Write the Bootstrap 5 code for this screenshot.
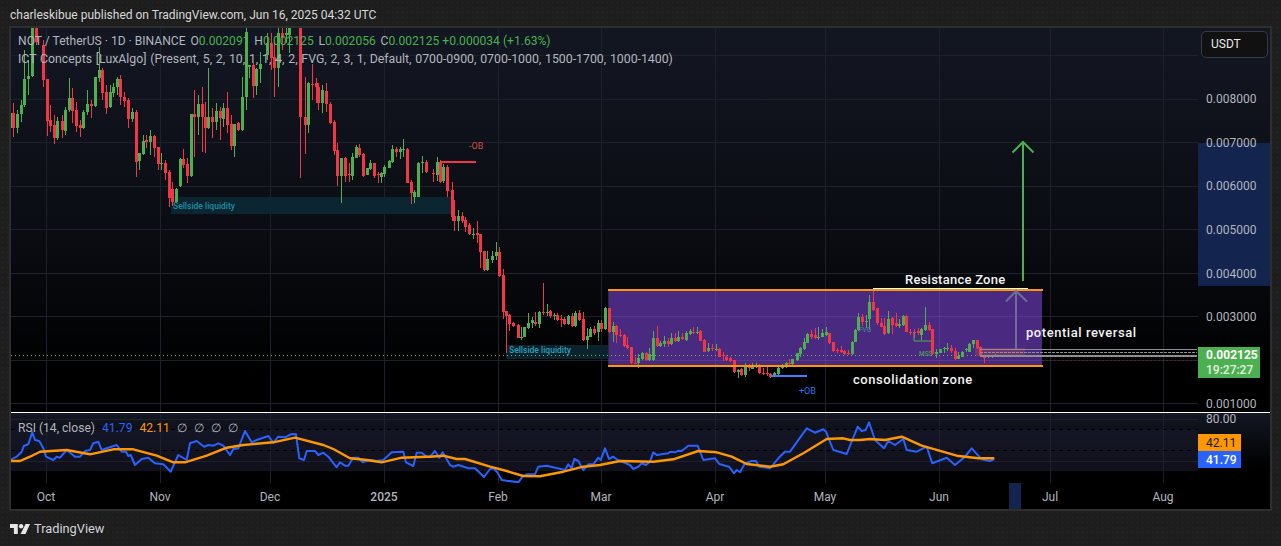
<!DOCTYPE html>
<html lang="en">
<head>
<meta charset="utf-8">
<title>NOT / TetherUS chart</title>
<link href="https://cdn.jsdelivr.net/npm/bootstrap@5.3.0/dist/css/bootstrap.min.css" rel="stylesheet">
<style>
html,body{height:100%;overflow:hidden}
body{background-color:#1e1e1e;background-image:radial-gradient(#2a2a2a .6px,transparent .7px);background-size:5px 5px;font-family:Roboto,"Liberation Sans",sans-serif;color:#d1d4dc}
.pub-head{height:26px;padding-left:10px;font-size:12px;line-height:30px;color:#d8d8d8;white-space:nowrap}
.chart-frame{height:485px;margin:0 9px;border:2px solid #2e2e2e;background:#000}
.chart-svg{display:block;width:1259px;height:481px}
.legend-box{top:5px;left:7px;font-size:12.1px;color:#b2b5be;white-space:nowrap}
.legend-row{line-height:17px}
.legend-row2{line-height:19px;font-size:12.3px;word-spacing:.72px}
.legend-up{color:#4caf50}
.legend-val{margin-left:4.8px}
.rsi-legend{top:392px;left:7px;font-size:12.1px;line-height:16px;color:#b2b5be;white-space:nowrap}
.rsi-item{margin-left:7px}
.rsi-blue{color:#2962ff}.rsi-orange{color:#ff9800}
.unit-btn{top:3px;right:2px;width:67px;height:27px;background:#111;border:1px solid #363a45;border-radius:5px;padding-left:9px;font-size:12px;line-height:25px;color:#e8e8e8}
.brand-foot{height:35px;padding-left:10px;font-size:12.8px;color:#d1d4dc}
.ax{font:12px Roboto,"Liberation Sans",sans-serif;fill:#b2b5be}
.note{font:500 13px Roboto,"Liberation Sans",sans-serif;fill:#f2f2f2;letter-spacing:.25px}
.note-wide{letter-spacing:.55px}
</style>
</head>
<body class="d-flex flex-column">
<div class="pub-head flex-shrink-0">charleskibue published on TradingView.com, Jun 16, 2025 04:32 UTC</div>
<div class="chart-frame position-relative flex-shrink-0">
<svg class="chart-svg" viewBox="11 28 1259 481" xmlns="http://www.w3.org/2000/svg">
<defs>
<linearGradient id="bgMain" x1="0" y1="0" x2="0" y2="1"><stop offset="0" stop-color="#131722"/><stop offset=".55" stop-color="#0a0c12"/><stop offset=".9" stop-color="#000"/></linearGradient>
<linearGradient id="bgRsi" x1="0" y1="0" x2="0" y2="1"><stop offset="0" stop-color="#131722"/><stop offset=".8" stop-color="#000"/></linearGradient>
</defs>
<rect x="11" y="28" width="1259" height="384" fill="url(#bgMain)"/>
<rect x="11" y="413" width="1259" height="70" fill="url(#bgRsi)"/>
<rect x="1198" y="143" width="72" height="143" fill="#13244f"/>
<rect x="11" y="429" width="1187" height="42" fill="#1a1a2c" opacity=".65"/>
<g id="gridLines" stroke="#1e212b" stroke-width="1" shape-rendering="crispEdges"></g>
<!-- liquidity boxes -->
<rect x="171" y="197" width="281" height="17" fill="#0b2630"/>
<rect x="506" y="345" width="102" height="14" fill="#0b232c"/>
<rect x="608" y="345" width="14" height="14" fill="#2c5a7a" opacity=".5"/>
<!-- consolidation box -->
<rect x="608" y="290" width="434" height="76" fill="#4a2a80"/>
<line x1="608.500" y1="290" x2="608.500" y2="366" stroke="#2a2a3c"/>
<g stroke="#fff" stroke-opacity=".07" shape-rendering="crispEdges"><line x1="608" x2="1042" y1="316.500" y2="316.500"/><line x1="608" x2="1042" y1="360.500" y2="360.500"/><line x1="715.500" x2="715.500" y1="290" y2="366"/><line x1="825.500" x2="825.500" y1="290" y2="366"/><line x1="939.500" x2="939.500" y1="290" y2="366"/></g>
<line x1="11" x2="1198" y1="355.500" y2="355.500" stroke="#6fae74" stroke-dasharray="1 3"/>
<g id="candles" shape-rendering="crispEdges"></g>
<!-- levels overlay -->
<rect x="975" y="348" width="50" height="8" fill="#d8505a" opacity=".28"/>
<g stroke="#8f8f8f" shape-rendering="crispEdges"><line x1="980" x2="1197" y1="349.500" y2="349.500"/><line x1="980" x2="1197" y1="352.500" y2="352.500" stroke-dasharray="3 1"/><line x1="980" x2="1197" y1="355.500" y2="355.500" stroke-width="2"/></g>
<line x1="1042" x2="1197" y1="360.500" y2="360.500" stroke="#5a2026" stroke-dasharray="2 2"/>
<path d="M914 332V341H931" fill="none" stroke="#4caf50"/>
<text x="919" y="356" font-size="6.500" fill="#4fae5a" font-family="Roboto,sans-serif">MSS</text>
<text x="859" y="332" font-size="6.500" fill="#4a8f98" font-family="Roboto,sans-serif">FVG</text>
<!-- orange borders -->
<line x1="608" x2="1043" y1="289.500" y2="289.500" stroke="#ff9800" stroke-width="2" shape-rendering="crispEdges"/>
<line x1="608" x2="1043" y1="366" y2="366" stroke="#ff9800" stroke-width="2" shape-rendering="crispEdges"/>
<line x1="873" x2="1028" y1="288.500" y2="288.500" stroke="#fff" shape-rendering="crispEdges"/>
<!-- order blocks -->
<line x1="440" x2="476" y1="162" y2="162" stroke="#f23645" stroke-width="2" shape-rendering="crispEdges"/>
<text x="469" y="149" font-size="9" fill="#c9553a" font-family="Roboto,sans-serif">-OB</text>
<line x1="771" x2="807" y1="375.500" y2="375.500" stroke="#3f7fff" stroke-width="2" shape-rendering="crispEdges"/>
<text x="799" y="394" font-size="9" fill="#3272f0" font-family="Roboto,sans-serif">+OB</text>
<text x="173" y="209" font-size="8.500" font-weight="500" fill="#1d8ca6" font-family="Roboto,sans-serif">Sellside liquidity</text>
<text x="509" y="353" font-size="8.500" font-weight="500" fill="#2a9fba" font-family="Roboto,sans-serif">Sellside liquidity</text>
<!-- arrows -->
<path d="M1023 281V142M1012.500 152.500L1023 142L1033.500 152.500" fill="none" stroke="#4caf50" stroke-width="2"/>
<path d="M1016 349V291M1006 301.500L1016 291L1027 301.500" fill="none" stroke="#6f6d98" stroke-width="2"/>
<!-- notes -->
<text class="note" x="905" y="284">Resistance Zone</text>
<text class="note note-wide" x="1026" y="337">potential reversal</text>
<text class="note note-wide" x="853" y="384">consolidation zone</text>
<!-- price axis -->
<g class="ax">
<text x="1206" y="103">0.008000</text><text x="1206" y="147">0.007000</text><text x="1206" y="190">0.006000</text><text x="1206" y="234">0.005000</text><text x="1206" y="278">0.004000</text><text x="1206" y="321">0.003000</text><text x="1206" y="408">0.001000</text><text x="1206" y="423">80.00</text>
</g>
<rect x="1198" y="347" width="62" height="31" fill="#4caf50"/>
<text x="1206" y="359" font-family="Roboto,sans-serif" font-size="12" font-weight="700" fill="#fff">0.002125</text>
<text x="1206" y="374" font-family="Roboto,sans-serif" font-size="12" font-weight="500" fill="#e3f1e3">19:27:27</text>
<!-- pane separator -->
<line x1="11" x2="1271" y1="412.500" y2="412.500" stroke="#fff" shape-rendering="crispEdges"/>
<!-- RSI -->
<g stroke="#000" stroke-dasharray="4 4" shape-rendering="crispEdges"><line x1="11" x2="1198" y1="429.500" y2="429.500"/><line x1="11" x2="1198" y1="450.500" y2="450.500"/></g>
<polyline id="rsiBlue" fill="none" stroke="#2962ff" stroke-width="2" stroke-linejoin="round"/>
<polyline id="rsiOrange" fill="none" stroke="#ff9800" stroke-width="2.400" stroke-linejoin="round"/>
<rect x="1198" y="434" width="43" height="17" fill="#ff9800"/>
<text x="1206" y="447" font-family="Roboto,sans-serif" font-size="12" fill="#131722">42.11</text>
<rect x="1198" y="451" width="43" height="17" fill="#2962ff"/>
<text x="1206" y="464" font-family="Roboto,sans-serif" font-size="12" font-weight="500" fill="#fff">41.79</text>
<!-- time axis -->
<rect x="11" y="483" width="1259" height="26" fill="#000"/>
<rect x="1009" y="483" width="12" height="26" fill="#13244f"/>
<g class="ax" text-anchor="middle">
<text x="46" y="501">Oct</text><text x="160" y="501">Nov</text><text x="270" y="501">Dec</text><text x="384" y="501" font-weight="500">2025</text><text x="498" y="501">Feb</text><text x="601" y="501">Mar</text><text x="715" y="501">Apr</text><text x="825" y="501">May</text><text x="939" y="501">Jun</text><text x="1050" y="501">Jul</text><text x="1163" y="501">Aug</text>
</g>
</svg>
<div class="legend-box position-absolute">
<div class="legend-row">NOT / TetherUS · 1D · BINANCE<span class="legend-val">O<span class="legend-up">0.002091</span></span><span class="legend-val">H<span class="legend-up">0.002125</span></span><span class="legend-val">L<span class="legend-up">0.002056</span></span><span class="legend-val">C<span class="legend-up">0.002125</span></span> <span class="legend-up">+0.000034 (+1.63%)</span></div>
<div class="legend-row2">ICT Concepts [LuxAlgo] (Present, 5, 2, 10, 1, 1, 4, 2, FVG, 2, 3, 1, Default, 0700-0900, 0700-1000, 1500-1700, 1000-1400)</div>
</div>
<div class="rsi-legend position-absolute">RSI (14, close)<span class="rsi-item rsi-blue">41.79</span><span class="rsi-item rsi-orange">42.11</span><span class="rsi-item">∅</span><span class="rsi-item">∅</span><span class="rsi-item">∅</span><span class="rsi-item">∅</span></div>
<div class="unit-btn position-absolute">USDT</div>
</div>
<div class="brand-foot d-flex align-items-center gap-1 flex-shrink-0">
<svg width="20" height="10" viewBox="0 0 36 18" fill="#e6e6e6" xmlns="http://www.w3.org/2000/svg"><path d="M0 0H14V18H7V7H0Z"/><circle cx="20" cy="4" r="4"/><path d="M28 0H36L28 18H19Z"/></svg>
<span>TradingView</span>
</div>
<script src="https://cdn.jsdelivr.net/npm/bootstrap@5.3.0/dist/js/bootstrap.bundle.min.js"></script>
<script>
(function(){
var NS='http://www.w3.org/2000/svg';
function el(p,n,a){var e=document.createElementNS(NS,n);for(var k in a)e.setAttribute(k,a[k]);p.appendChild(e);return e;}
var grid=document.getElementById('gridLines');
[55,99,142,186,229,273,316,360,403,419,461].forEach(function(y){el(grid,'line',{x1:11,x2:1198,y1:y+.5,y2:y+.5});});
[46,160,270,384,498,601,715,825,939,1050,1163].forEach(function(x){el(grid,'line',{x1:x+.5,x2:x+.5,y1:28,y2:483});});
/* candle tables, read from the picture: x top bottom colour [wickTop wickBottom] at 3x scale */
var A="40 340 385 r 310 412;52 342 385 g 330 400;64 315 342 g 300 365;73 238 315 g 150 320;85 228 238 g 180 285;97 80 228 g 80 232;108 85 125 r 80 135;130 135 240 r 120 260;140 238 362 r 238 408;150 360 378 r 315 395;162 375 415 r 345 432;172 362 415 g 350 420;185 362 390 r 345 415;196 330 393 g 320 405;206 295 330 g 235 335;217 295 333 r 265 368;229 330 378 r 305 395;240 375 383 r 360 412;250 335 383 g 330 388;262 312 335 g 270 345;272 312 318 r 300 355;284 232 318 g 230 322;296 210 235 g 140 245;305 210 280 r 205 300;317 275 323 r 255 342;329 275 322 g 255 325;339 262 278 g 248 290;351 238 262 g 230 285;361 238 292 r 225 315;373 292 303 r 275 320;383 300 357 r 295 383;395 335 357 g 325 365;407 335 485 r 330 530;417 460 483 g 458 510;428 422 462 g 405 465;438 420 425 r 405 445;450 408 425 g 390 465;462 408 443 r 405 470;473 440 493 r 440 510;484 490 493 g 460 510;494 490 520 r 480 540;506 515 595 r 510 620;517 568 605 r 545 618;527 568 605 g 565 610;539 477 557 g 475 560;550 477 495 r 447 505;561 493 527 r 475 550;572 343 527 g 343 530;583 343 350 r 270 470;594 312 350 g 285 405;605 312 350 r 260 455;614 350 385 r 305 458;625 350 385 g 205 388;637 352 365 r 325 415;648 332 365 g 310 390;659 332 355 r 320 420;670 325 358 g 310 382;680 325 375 r 275 400;692 373 437 r 345 450;703 372 437 g 372 472;714 370 390 r 365 392;725 292 390 g 230 392;737 97 292 g 80 330;747 195 200 g 195 235;758 195 258 r 190 295;769 208 258 g 205 285;780 192 208 g 155 250;800 130 165 g 100 180;812 130 175 r 100 210;823 170 205 r 120 290;835 100 205 g 85 260;847 100 115 r 80 150;858 100 104 g 80 130;868 80 105 g 75 160;900 80 350 r 80 535;914 350 375 r 230 462;923 250 375 g 245 400;935 253 256 r 192 300;947 250 262 r 235 310;955 262 310 r 250 330;967 270 310 g 255 338;979 272 312 r 250 335;990 312 368 r 305 372;1001 366 452 r 360 465;1012 450 528 r 430 558;1022 475 528 g 475 610;1034 475 528 r 470 545;1046 522 525 r 490 545;1055 470 527 g 460 540;1067 442 473 g 435 475;1078 445 465 r 432 470;1088 462 527 r 460 530;1100 505 525 g 505 525;1111 488 507 g 480 510;1122 490 528 r 488 535;1133 522 525 r 515 548;1144 520 530 g 515 548;1153 500 522 g 495 530;1166 483 503 g 480 505;1177 447 485 g 435 488;1187 447 455 r 440 470;1199 447 455 g 440 478;1210 447 450 g 418 470;1220 447 548 r 445 550;1232 545 578 r 540 612;1243 575 590 g 570 608;1253 488 590 g 487 592;1265 485 488 g 468 520;1277 487 515 r 480 520";
var B="8 158 161 r 148 185;20 125 165 g 110 182;30 125 185 r 120 188;40 140 183 g 132 188;52 140 213 r 135 230;65 210 290 r 185 302;73 288 303 r 240 332;85 288 303 g 270 332;97 288 303 r 275 310;106 300 320 r 292 335;118 316 342 r 308 345;130 341 343 g 325 358;140 340 345 r 303 370;151 343 395 r 343 445;163 393 450 r 393 452;172 418 450 g 392 452;185 408 420 g 392 428;197 396 408 g 366 420;206 396 467 r 380 470;218 465 575 r 448 598;229 572 587 r 572 700;238 585 612 r 582 632;250 610 618 r 605 622;263 615 653 r 612 655;272 651 654 g 620 660;283 622 650 g 620 652;295 610 625 g 578 628;305 600 610 g 590 625;316 605 612 r 575 618;328 575 612 g 572 625;339 575 578 r 490 585;350 575 578 g 552 588;360 572 587 r 570 595;371 585 588 g 580 600;382 585 600 r 578 603;393 598 600 r 585 622;403 597 612 r 590 615;415 588 612 g 585 615;426 588 618 r 578 622;436 578 618 g 572 620;448 578 600 r 570 602;460 598 660 r 575 662;472 648 660 g 625 688;481 628 650 g 622 652;493 628 640 r 618 645;505 610 635 g 600 662;514 610 628 r 600 635;526 565 628 g 562 630;538 565 636 r 565 640;548 618 636 g 605 665;559 618 645 r 615 668;570 645 648 r 628 650;581 645 678 r 642 680;592 676 684 r 650 688;604 680 730 r 680 732;614 728 731 r 712 732;625 713 728 g 703 743;637 700 718 g 695 720;648 700 720 r 695 722;658 703 720 g 685 722;670 655 720 g 632 722;680 655 678 r 618 680;691 668 678 g 662 682;703 663 672 g 648 680;713 663 672 r 655 680;724 655 672 g 640 675;735 655 663 r 640 665;745 652 663 g 632 665;757 650 658 r 640 660;769 640 660 g 632 662;779 632 642 g 628 645;790 635 637 r 622 642;802 635 637 g 622 642;811 632 662 r 630 664;823 660 695 r 658 697;835 685 692 g 670 695;846 683 686 r 673 692;857 688 690 g 672 692;868 688 710 r 685 712;878 706 709 r 695 722;889 710 720 r 705 723;901 715 723 r 710 725;912 720 755 r 720 758;923 750 757 g 748 775;934 748 765 r 745 768;946 738 765 g 730 772;956 740 743 r 732 752;967 735 746 g 730 748;978 738 741 g 728 745;988 735 760 r 732 762;1000 758 761 r 745 765;1011 758 761 r 742 768;1021 763 772 r 758 775;1033 760 768 g 755 770;1045 745 762 g 742 764;1055 736 745 g 732 748;1067 730 742 g 725 744;1077 730 732 r 718 734;1087 716 732 g 716 734;1100 700 720 g 698 722;1111 685 703 g 680 712;1121 666 687 g 655 690;1132 642 668 g 640 670;1144 642 650 r 630 658;1154 645 655 r 625 658;1165 650 653 g 622 660;1177 640 650 g 628 652;1187 637 645 g 620 648;1198 640 670 r 638 672;1210 666 692 r 666 695;1220 690 692 r 685 698;1232 690 695 r 678 698;1243 693 702 r 690 706;1254 698 701 r 690 706";
var C="35 185 222 g 183 224;45 150 185 g 148 187;55 110 150 g 100 152;67 110 125 r 103 138;78 123 127 g 105 145;88 65 118 g 45 150;100 65 90 r 30 92;111 85 130 r 83 135;122 128 140 r 115 142;133 138 162 r 115 165;145 118 160 g 92 162;157 115 135 r 112 162;167 130 137 r 100 142;178 132 137 g 118 145;189 108 135 g 105 137;199 108 155 r 105 157;211 155 158 r 148 165;222 155 158 r 148 175;233 152 160 r 145 164;244 148 165 g 145 180;255 135 150 g 80 152;266 135 150 r 125 152;277 148 222 r 148 224;289 215 222 g 208 235;299 208 218 g 206 220;311 205 208 g 200 220;322 203 207 g 190 212;333 203 212 r 195 218;344 212 238 r 205 240;355 228 236 g 215 238;366 215 230 g 213 232;377 208 211 g 205 216;388 192 215 g 190 217;398 180 192 g 180 205;410 180 205 r 180 208;421 200 228 r 198 231;432 228 235 r 225 250;443 228 231 g 224 235;455 228 231 g 224 235;465 226 230 g 222 232";
var g=document.getElementById('candles'),col={r:'#f23645',g:'#4caf50'};
function draw(s,ox,oy){s.split(';').forEach(function(row){var p=row.split(' '),x=Math.round(ox+p[0]/3),t=oy+p[1]/3,b=oy+p[2]/3,wt=oy+p[4]/3,wb=oy+p[5]/3;
 var tt=Math.max(t,28),wtt=Math.max(wt,28),c=col[p[3]];
 el(g,'rect',{x:x,y:wtt,width:1,height:Math.max(wb-wtt,1),fill:c});
 el(g,'rect',{x:x-1,y:tt,width:3,height:Math.max(b-tt,1),fill:c});});}
el(g,'rect',{x:10,y:113,width:3,height:15,fill:col.g});
draw(A,0,0);draw(B,430,120);draw(C,840,280);
var blue="30,165 50,155 65,140 72,122 85,118 97,82 105,105 118,108 130,130 138,155 160,165 170,155 180,158 200,135 225,155 240,155 255,138 270,135 280,115 295,110 305,135 320,130 350,120 365,140 378,140 385,153 392,150 405,180 425,162 445,158 465,175 490,178 512,200 535,150 560,165 570,115 590,108 612,125 625,120 640,122 655,115 670,122 690,150 700,132 715,130 735,78 755,112 770,105 805,93 820,113 835,95 855,97 875,87 888,88 898,160 912,165 920,138 945,138 955,150 970,143 985,155 1010,187 1020,172 1035,182 1045,182 1060,158 1075,158 1088,172 1110,165 1130,168 1150,165 1175,142 1210,140 1218,172 1240,183 1250,143 1265,143 1280,155";
var blue2="0,125 15,108 28,128 38,112 60,150 70,155 85,150 115,160 135,160 162,186 180,162 190,160 202,172 215,195 265,202 280,182 290,178 315,178 325,155 350,152 405,165 415,148 425,160 433,132 445,138 460,165 475,148 490,148 505,128 512,135 525,100 537,132 550,125 560,133 600,150 610,162 625,155 635,145 648,150 660,140 670,112 680,120 715,115 720,110 735,112 745,107 755,108 775,92 803,92 820,135 855,130 868,147 897,155 912,175 920,165 930,172 945,145 965,138 978,138 988,155 1020,160 1045,130 1065,110 1080,110 1130,40 1155,53 1180,43 1188,50 1210,105 1250,117 1283,35";
var blue3="35,78 47,75 57,52 75,105 102,130 115,108 135,120 160,102 170,135 200,140 230,125 247,175 290,158 315,180 345,155 365,130 395,163 420,168 433,162";
var or1="30,168 60,168 90,155 120,140 200,135 270,148 340,133 400,133 470,152 520,172 555,172 620,152 680,128 730,120 820,112 885,98 970,120 1000,132 1050,160 1100,165 1145,172 1205,158 1280,155";
var or2="0,125 40,122 80,132 105,132 180,155 230,168 280,183 330,184 400,170 460,155 510,150 570,138 670,140 730,133 805,108 860,112 905,125 950,147 1020,155 1060,148 1120,115 1190,72 1240,70 1260,75 1290,75";
var or3="60,102 105,105 155,95 215,122 320,152 385,160 433,160";
function pts(s,ox,oy){return s.split(' ').map(function(q){var a=q.split(',');return (ox+a[0]/3).toFixed(1)+','+(oy+a[1]/3).toFixed(1);}).join(' ');}
document.getElementById('rsiBlue').setAttribute('points',pts(blue,0,405)+' '+pts(blue2,430,415)+' '+pts(blue3,850,405));
document.getElementById('rsiOrange').setAttribute('points',pts(or1,0,405)+' '+pts(or2,430,415)+' '+pts(or3,850,405));
})();
</script>
</body>
</html>
